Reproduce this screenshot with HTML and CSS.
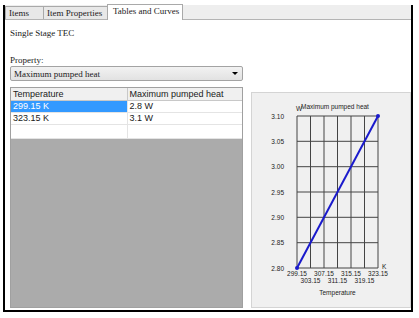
FILE: index.html
```html
<!DOCTYPE html>
<html lang="en">
<head>
    <meta charset="UTF-8">
    <title>Tables and Curves</title>
    <link rel="stylesheet" href="styles.css">
</head>
<body>
    <div class="window">
        <div class="tabs">
            <div class="tab">Items</div>
            <div class="tab">Item Properties</div>
            <div class="tab active">Tables and Curves</div>
        </div>
        <div class="content">
            <div class="title">Single Stage TEC</div>
            <div class="main">
                <div class="left">
                    <div class="label">Property:</div>
                    <div class="select">
                        <span>Maximum pumped heat</span>
                        <span class="arrow"></span>
                    </div>
                    <div class="grid">
                        <table>
                            <tr class="head">
                                <td class="c1">Temperature</td>
                                <td>Maximum pumped heat</td>
                            </tr>
                            <tr class="selected">
                                <td class="c1">299.15 K</td>
                                <td>2.8 W</td>
                            </tr>
                            <tr>
                                <td class="c1">323.15 K</td>
                                <td>3.1 W</td>
                            </tr>
                            <tr class="blank">
                                <td class="c1"></td>
                                <td></td>
                            </tr>
                        </table>
                    </div>
                </div>
                <div class="chart">
                    <svg width="160" height="216" viewBox="0 0 160 216">
                        <g class="gridlines">
                            <line x1="46" y1="24" x2="46" y2="176"/>
                            <line x1="59.5" y1="24" x2="59.5" y2="176"/>
                            <line x1="73" y1="24" x2="73" y2="176"/>
                            <line x1="86.5" y1="24" x2="86.5" y2="176"/>
                            <line x1="100" y1="24" x2="100" y2="176"/>
                            <line x1="113.5" y1="24" x2="113.5" y2="176"/>
                            <line x1="127" y1="24" x2="127" y2="176"/>
                            <line x1="46" y1="24" x2="127" y2="24"/>
                            <line x1="46" y1="49.3" x2="127" y2="49.3"/>
                            <line x1="46" y1="74.7" x2="127" y2="74.7"/>
                            <line x1="46" y1="100" x2="127" y2="100"/>
                            <line x1="46" y1="125.3" x2="127" y2="125.3"/>
                            <line x1="46" y1="150.7" x2="127" y2="150.7"/>
                            <line x1="46" y1="176" x2="127" y2="176"/>
                        </g>
                        <g class="ylabels">
                            <text x="33" y="26.5">3.10</text>
                            <text x="33" y="51.8">3.05</text>
                            <text x="33" y="77.2">3.00</text>
                            <text x="33" y="102.5">2.95</text>
                            <text x="33" y="127.8">2.90</text>
                            <text x="33" y="153.2">2.85</text>
                            <text x="33" y="178.5">2.80</text>
                        </g>
                        <g class="xlabels">
                            <text x="46" y="184">299.15</text>
                            <text x="73" y="184">307.15</text>
                            <text x="100" y="184">315.15</text>
                            <text x="127" y="184">323.15</text>
                            <text x="59.5" y="190.5">303.15</text>
                            <text x="86.5" y="190.5">311.15</text>
                            <text x="113.5" y="190.5">319.15</text>
                            <text x="86.5" y="203">Temperature</text>
                        </g>
                        <text class="unit" x="131" y="177">K</text>
                        <text class="unit" x="45" y="19">W</text>
                        <text class="unit" x="50" y="17">Maximum pumped heat</text>
                        <line class="curve" x1="46" y1="176" x2="127" y2="24"/>
                        <circle class="dot" cx="46" cy="176" r="2"/>
                        <circle class="dot" cx="127" cy="24" r="2"/>
                    </svg>
                </div>
            </div>
        </div>
    </div>
</body>
</html>
```

FILE: styles.css
```css
body {
    margin: 0;
    background: #ffffff;
    font-family: 'Liberation Serif', serif;
    font-size: 9px;
    color: #1a1a1a;
}
.window {
    margin: 5px 0 0 3px;
    width: 410px;
    height: 307px;
    box-sizing: border-box;
    border: 2px solid #000000;
    border-top: none;
    display: flex;
    flex-direction: column;
}
.tabs {
    display: flex;
    align-items: flex-end;
    height: 15px;
    background: #eeeeee;
    border-bottom: 1px solid #b4b4b4;
    box-sizing: border-box;
}
.tab {
    height: 13px;
    line-height: 12px;
    padding: 0 3px;
    white-space: nowrap;
    border: 1px solid #a9a9a9;
    border-bottom: none;
    border-right: none;
    background: #e8e8e8;
    box-sizing: border-box;
}
.tab:nth-child(1) {
    width: 38px;
}
.tab:nth-child(2) {
    width: 64px;
}
.tab.active {
    width: 76px;
    height: 16px;
    margin-bottom: -1px;
    line-height: 13px;
    background: #ffffff;
    border-right: 1px solid #a9a9a9;
    padding-left: 5px;
}
.content {
    flex: 1;
    padding-left: 5px;
}
.title {
    margin-top: 7px;
    line-height: 12px;
}
.main {
    display: flex;
    align-items: flex-start;
    margin-top: 15px;
    gap: 8px;
}
.left {
    width: 233px;
}
.label {
    line-height: 12px;
}
.select {
    display: flex;
    justify-content: space-between;
    align-items: center;
    height: 15px;
    box-sizing: border-box;
    padding: 0 4px 0 3px;
    border: 1px solid #a3a3a3;
    border-radius: 2px;
    background: linear-gradient(#f2f2f2, #e2e2e2);
}
.arrow {
    width: 0;
    height: 0;
    border-left: 3px solid transparent;
    border-right: 3px solid transparent;
    border-top: 3px solid #000000;
}
.grid {
    margin-top: 6px;
    height: 221px;
    box-sizing: border-box;
    border: 1px solid #a0a0a0;
    background: #ababab;
}
.grid table {
    width: 100%;
    border-collapse: collapse;
    font-family: 'Liberation Sans', sans-serif;
    font-size: 9px;
    background: #ffffff;
}
.grid td {
    height: 12px;
    padding: 0 0 0 2px;
    border-bottom: 1px solid #e4e4e4;
    box-sizing: border-box;
}
.grid td.c1 {
    width: 116px;
    border-right: 1px solid #e4e4e4;
}
.grid .head td {
    background: #f0f0f0;
    border-bottom: 1px solid #c8c8c8;
}
.grid .head td.c1 {
    border-right: 1px solid #c8c8c8;
}
.grid .selected td.c1 {
    background: #3399ff;
    color: #ffffff;
}
.grid .blank td {
    height: 14px;
}
.chart {
    margin-top: 38px;
    width: 160px;
    height: 216px;
    box-sizing: border-box;
    border: 1px solid #d4d4d4;
    background: #f0f0f0;
}
.chart svg {
    display: block;
    margin: -1px;
}
.gridlines line {
    stroke: #444444;
    stroke-width: 1;
}
.chart text {
    font-family: 'Liberation Sans', sans-serif;
    font-size: 6.5px;
    fill: #222222;
}
.ylabels text {
    text-anchor: end;
}
.xlabels text {
    text-anchor: middle;
}
.curve {
    stroke: #1a1acc;
    stroke-width: 2;
}
.dot {
    fill: #1a1acc;
}
```
